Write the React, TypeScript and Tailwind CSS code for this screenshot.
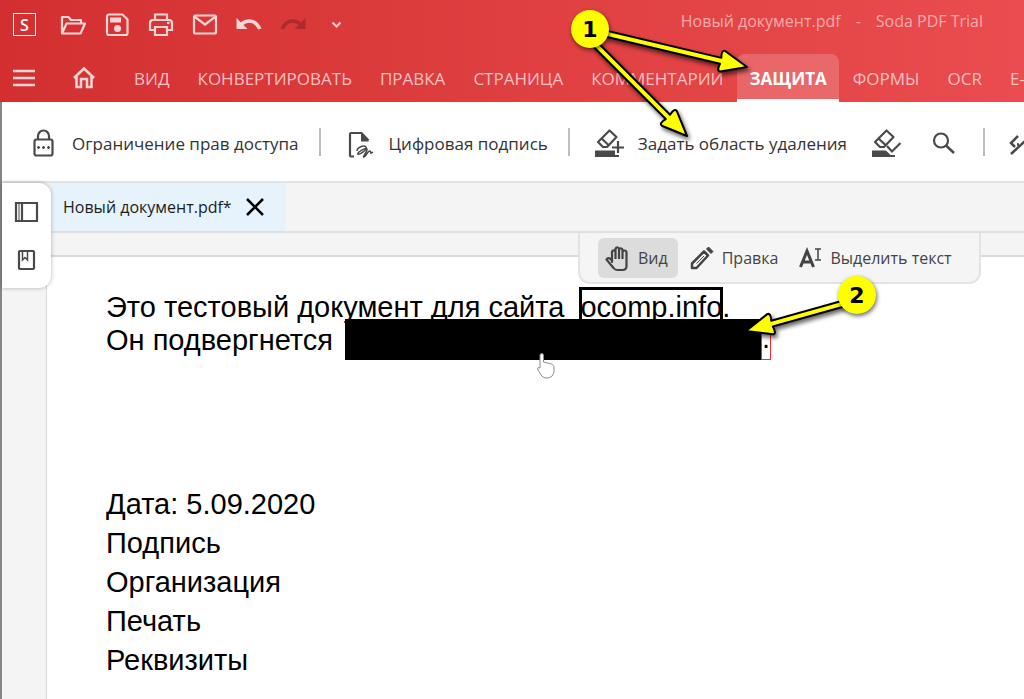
import type { ReactNode } from "react";

const Icon = ({ children, size = 28 }: { children: ReactNode; size?: number }) => (
    <svg
        className="shrink-0"
        width={size}
        height={size}
        viewBox={`0 0 ${size} ${size}`}
        fill="none"
        stroke="currentColor"
        strokeWidth={2.2}
        aria-hidden="true"
    >
        {children}
    </svg>
);

const quickActions = [
    {
        label: "Открыть", icon: (
            <Icon>
                <path d="M3 22V6h6.500l2.500 3h10v3.500M3 22.500l4.500-10H26l-4.500 10z" strokeLinejoin="round" />
            </Icon>
        )
    },
    {
        label: "Сохранить", icon: (
            <Icon>
                <path d="M6 3.500h13.500l5 5V22a2 2 0 01-2 2H6a2 2 0 01-2-2V5.500a2 2 0 012-2z" />
                <path d="M7 6.500h11v5H7z" fill="currentColor" stroke="none" />
                <circle cx="14.500" cy="17.500" r="3.500" fill="currentColor" stroke="none" />
            </Icon>
        )
    },
    {
        label: "Печать", icon: (
            <Icon>
                <path d="M8 9V3.500h12V9M8 19H3v-7a3 3 0 013-3h16a3 3 0 013 3v7h-5M8 16h12v8H8z" />
                <path d="M20 12h2.500" />
            </Icon>
        )
    },
    {
        label: "Почта", icon: (
            <Icon>
                <rect x="3" y="4.500" width="22" height="18" rx="1.500" />
                <path d="M4 6l10 7.500L24 6" />
            </Icon>
        )
    },
    {
        label: "Отменить", icon: (
            <Icon>
                <path d="M1.500 7v11h11l-4-4c5-4 11-3 14.500 4.500l3.500-1C23 8 13 5.500 5.700 11.200z" fill="currentColor" stroke="none" />
            </Icon>
        )
    },
    {
        label: "Повторить", disabled: true, icon: (
            <Icon>
                <path d="M26.500 7v11h-11l4-4c-5-4-11-3-14.500 4.500l-3.500-1C5 8 15 5.500 22.300 11.200z" fill="currentColor" stroke="none" />
            </Icon>
        )
    },
    {
        label: "Ещё", icon: (
            <Icon>
                <path d="M9.500 11.500l4 4 4-4" />
            </Icon>
        )
    },
];

const menu = ["ВИД", "КОНВЕРТИРОВАТЬ", "ПРАВКА", "СТРАНИЦА", "КОММЕНТАРИИ", "ЗАЩИТА", "ФОРМЫ", "OCR", "E-"];

const Header = () => (
    <header className="bg-linear-to-r from-[#d32f30] via-[#df3f40] to-[#ea4c4f] text-[#fbd5d5]">
        <div className="flex h-[54px] items-start pt-[11px]">
            <div className="ml-[13px] mt-0.5 flex h-[23px] w-[23px] shrink-0 items-center justify-center border border-white text-base font-semibold text-white">
                S
            </div>
            <div className="ml-[15px] flex">
                {quickActions.map((action) => (
                    <button
                        key={action.label}
                        type="button"
                        aria-label={action.label}
                        disabled={action.disabled}
                        className="flex w-11 justify-center disabled:text-[#b02a2b]"
                    >
                        {action.icon}
                    </button>
                ))}
            </div>
            <div className="ml-auto mr-[41px] flex gap-[15px] whitespace-nowrap text-base leading-5 text-[#f5a9aa]">
                <span>Новый документ.pdf</span>
                <span>-</span>
                <span>Soda PDF Trial</span>
            </div>
        </div>
        <nav className="flex h-12 overflow-hidden whitespace-nowrap text-[17px] text-[#f8bfc0]">
            <button type="button" aria-label="Меню" className="w-12 shrink-0 pl-[10px] text-[#fbd5d5]">
                <Icon>
                    <path d="M3 7h22M3 14h22M3 21h22" strokeWidth={2.500} />
                </Icon>
            </button>
            <button type="button" aria-label="Главная" className="flex w-[72px] shrink-0 items-center justify-center text-[#fbd5d5]">
                <Icon>
                    <path d="M4 14L14 4.500 24 14M6.500 12v11H11v-8h6v8h4.500V12" strokeWidth={2.500} />
                </Icon>
            </button>
            {menu.map((item) =>
                item === "ЗАЩИТА" ? (
                    <button key={item} type="button" aria-current="page" className="shrink-0 rounded-t-lg border-b-3 border-white bg-white/18 px-3 pt-1 font-bold text-white">
                        {item}
                    </button>
                ) : (
                    <button key={item} type="button" className="shrink-0 px-[14px] pt-0.5">
                        {item}
                    </button>
                )
            )}
        </nav>
    </header>
);

const Eraser = () => (
    <>
        <path d="M1 22.500h20V29H1z" fill="currentColor" stroke="none" />
        <path d="M15.500 2.500l7 6.500-9.500 10H9l-5-5z M7.500 10.500l6.500 6" strokeLinejoin="round" />
    </>
);

const Divider = () => <div className="mb-1 h-7 w-0.5 shrink-0 bg-[#bdbdbd]" />;

const Toolbar = () => (
    <div className="flex h-[81px] items-center overflow-hidden whitespace-nowrap border-b-2 border-[#e3e3e3] bg-white pl-6 pt-1 text-[17px] text-[#333] [&_svg]:text-[#4a4a4a]">
        <button type="button" className="mr-5 flex items-center gap-3">
            <Icon size={34}>
                <path d="M12 13V9a5.500 5.500 0 0111 0v4" />
                <rect x="8.500" y="12.500" width="18" height="16" rx="2" />
                <path d="M11 20.500h3M12.500 19v3M16 20.500h3M17.500 19v3M21 20.500h3M22.500 19v3" strokeWidth={1.300} />
            </Icon>
            Ограничение прав доступа
        </button>
        <Divider />
        <button type="button" className="ml-6 mr-5 flex items-center gap-3">
            <Icon size={32}>
                <path d="M9 28.500H6a1 1 0 01-1-1V6a1 1 0 011-1h10.500l7 7.500" />
                <path d="M16 4v9.500h8z" fill="currentColor" stroke="none" />
                <path d="M12 23c0-4 7-6 9-4s-6 8-8 7 8-7 9-5-5 8-3 8 4-7 6-6-1 4 3 1" strokeWidth={1.500} />
            </Icon>
            Цифровая подпись
        </button>
        <Divider />
        <button type="button" className="ml-6 mr-6 flex items-center gap-3">
            <Icon size={32}>
                <Eraser />
                <path d="M24 13v13M17 19.500h14" stroke="white" strokeWidth={5} />
                <path d="M24 13v12M18 19.500h12M20 28h5" />
            </Icon>
            Задать область удаления
        </button>
        <button type="button" aria-label="Применить удаление" className="mr-6">
            <Icon size={32}>
                <Eraser />
                <path d="M15 19l6 6 9-9" stroke="white" strokeWidth={5} />
                <path d="M16 18l5 5.500 8.500-8.500M18 28h6" />
            </Icon>
        </button>
        <button type="button" aria-label="Найти" className="mr-6">
            <Icon size={32}>
                <circle cx="14" cy="12.500" r="7" />
                <path d="M19 17.500l8 7.500" strokeWidth={2.500} />
            </Icon>
        </button>
        <Divider />
        <button type="button" aria-label="Проверить подпись" className="ml-5">
            <Icon size={32}>
                <path d="M13 8l-7 7 4 4M6 26L20 13M12 16.500h2" strokeWidth={2.500} />
            </Icon>
        </button>
    </div>
);

const SidePanel = () => (
    <aside className="absolute left-0 top-0 flex h-[105px] w-[49px] flex-col items-center justify-center gap-5 rounded-r-xl bg-white text-[#4a4a4a] shadow-[0_0_4px_rgba(0,0,0,0.3)]">
        <button type="button" aria-label="Миниатюры">
            <Icon>
                <path d="M3 5h21v18H3zM9 5v18" />
                <path d="M6 5v18" strokeWidth={1} />
            </Icon>
        </button>
        <button type="button" aria-label="Закладки">
            <Icon>
                <rect x="6" y="5" width="15" height="18" rx="1" />
                <path d="M9.500 5v9l2.500-2.500 2.500 2.500V5" strokeWidth={1.500} />
            </Icon>
        </button>
    </aside>
);

const ModeBar = () => (
    <div className="absolute right-[43px] top-0 flex h-[51px] w-[403px] items-start gap-[10px] whitespace-nowrap rounded-b-xl border-2 border-t-0 border-[#e3e3e3] bg-[#f5f5f5] pl-[18px] pt-[5px] text-base text-[#444]">
        <button type="button" aria-pressed="true" className="flex h-10 items-center gap-[6px] rounded-md bg-[#dcdcdc] px-[6px] pr-[10px]">
            <Icon>
                <path d="M8 18V7.500a2 2 0 013.500 0V13 4.500a2 2 0 013.500 0V13 5.500a2 2 0 013.500 0V13 8.500a2 2 0 014 0V22c0 2-1 4-4 4h-5c-2 0-3-.500-4-2l-7-8.500c1-2 3-2 5.500 1z M11.500 6v9M15 5v10M18.500 7v8" strokeLinejoin="round" />
            </Icon>
            Вид
        </button>
        <button type="button" className="flex h-10 items-center gap-[6px]">
            <Icon>
                <path d="M4 24v-4.500L16 7.500l4 4L8.500 24z" strokeWidth={2.500} strokeLinejoin="round" />
                <path d="M8.500 19.500l7.500-7.500" strokeWidth={1} />
                <path d="M18.500 5l2-2 4.500 4.500-2 2z" fill="currentColor" strokeWidth={1} />
            </Icon>
            Правка
        </button>
        <button type="button" className="ml-[10px] flex h-10 items-center gap-[6px]">
            <Icon size={26}>
                <path d="M2.500 22L9 6l6.500 16M5 17h8" strokeWidth={3} />
                <path d="M17 4h6M20 4v11M17 15h6" strokeWidth={1.500} />
            </Icon>
            Выделить текст
        </button>
    </div>
);

const DocumentPage = () => (
    <article className="ml-11 flex-1 border-l border-t-2 border-[#dadada] bg-white pl-[59px] pt-[34px] font-['Liberation_Sans',Arial,sans-serif] text-[29px] text-black">
        <p className="whitespace-nowrap leading-[33px]">
            Это тестовый документ для сайта{" "}
            <span className="relative ml-2">
                ocomp.info
                <span className="absolute -inset-x-px -top-1 h-9 border-3 border-black" />
            </span>
            .
        </p>
        <p className="flex whitespace-pre leading-[33px]">
            {"Он подвергнется "}
            <span className="relative ml-1 w-[416px]">
                <span className="absolute inset-x-0 -top-[5px] h-[41px] bg-black" />
                <svg className="absolute left-[189px] top-7" width="22" height="28" viewBox="0 0 22 28" fill="white" stroke="#8a8a8a" aria-hidden="true">
                    <path d="M6 16V3a1.800 1.800 0 013.500 0v7l8 2c2 1 2.500 2 2.500 4v3c0 4-3 7-7 7-3 0-5-1-6.500-4L4 18c-1-2 0-3 2-2z" />
                </svg>
            </span>
            <span className="-mt-[3px] h-[39px] border border-red-500">.</span>
        </p>
        <div className="mt-[125px] whitespace-nowrap leading-[39px]">
            <p>Дата: 5.09.2020</p>
            <p>Подпись</p>
            <p>Организация</p>
            <p>Печать</p>
            <p>Реквизиты</p>
        </div>
    </article>
);

const Badge = ({ children }: { children: ReactNode }) => (
    <span className="flex h-[38px] w-[38px] items-center justify-center rounded-full bg-[#ffff00] font-['DejaVu_Sans',Verdana,sans-serif] text-[22px] font-bold text-black shadow-[1px_2px_4px_rgba(0,0,0,0.6)]">
        {children}
    </span>
);

// Numbered callouts drawn over the window
const Callouts = () => (
    <div className="pointer-events-none absolute inset-0 overflow-hidden">
        <svg
            className="absolute left-0 top-0 drop-shadow-[2px_3px_2px_rgba(0,0,0,0.6)]"
            width="1024"
            height="400"
            viewBox="0 0 1024 400"
            fill="#ffff00"
            stroke="black"
            strokeWidth={2}
            strokeLinejoin="round"
            aria-hidden="true"
        >
            <path transform="translate(747 67) rotate(13.300)" d="M0 0L-25-10.500Q-29-11-27-3H-145V3H-27Q-29 11-25 10.500Z" />
            <path transform="translate(687 136) rotate(45)" d="M0 0L-25-10.500Q-29-11-27-3H-130V3H-27Q-29 11-25 10.500Z" />
            <path transform="translate(746 331) rotate(164.300)" d="M0 0L-25-10.500Q-29-11-27-3H-102V3H-27Q-29 11-25 10.500Z" />
        </svg>
        <div className="absolute left-[571px] top-[10px]">
            <Badge>1</Badge>
        </div>
        <div className="absolute left-[838px] top-[276px]">
            <Badge>2</Badge>
        </div>
    </div>
);

const App = () => {
    return (
        <div className="relative flex min-h-screen flex-col overflow-hidden bg-white font-['Open_Sans','Noto_Sans',sans-serif]">
            <Header />
            <main className="flex flex-1 flex-col border-l-2 border-[#858585]">
                <Toolbar />
                <div className="relative flex flex-1 flex-col bg-[#f4f4f4]">
                    <div className="flex h-[50px] border-b-2 border-[#e0e0e0] pl-[49px]">
                        <div className="flex w-[235px] items-center gap-[10px] bg-[#e6f3fd] pl-3 text-base text-[#1c1c1c]">
                            <span className="whitespace-nowrap">Новый документ.pdf*</span>
                            <button type="button" aria-label="Закрыть">
                                <Icon size={26}>
                                    <path d="M5 5l16 16M21 5L5 21" stroke="black" strokeWidth={2.500} />
                                </Icon>
                            </button>
                        </div>
                    </div>
                    <div className="relative flex flex-1 flex-col pt-[22px]">
                        <DocumentPage />
                        <ModeBar />
                    </div>
                    <SidePanel />
                </div>
            </main>
            <Callouts />
        </div>
    );
};

export default App;
